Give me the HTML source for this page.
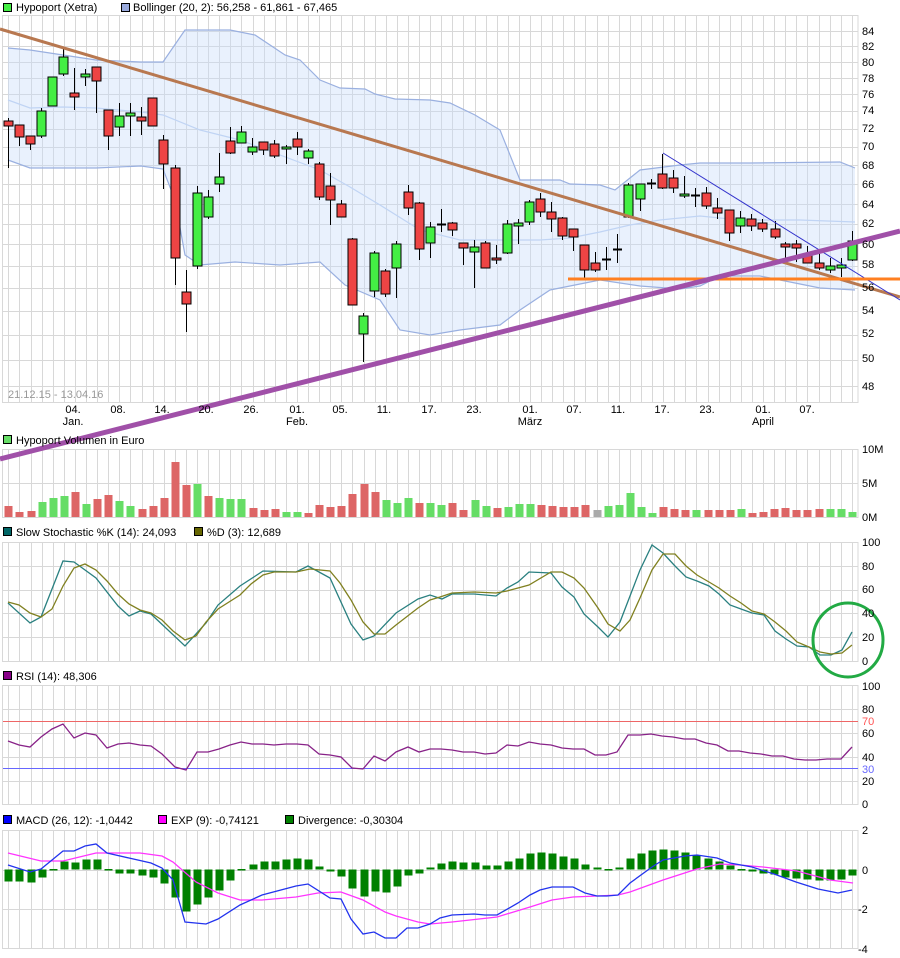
<!DOCTYPE html>
<html><head><meta charset="utf-8"><style>
html,body{margin:0;padding:0;background:#fff;width:900px;height:958px;overflow:hidden}
svg{display:block}
text{font-family:"Liberation Sans",sans-serif;font-size:11px;fill:#000}
</style></head><body>
<svg id="s" width="900" height="958" xmlns="http://www.w3.org/2000/svg">
<rect width="900" height="958" fill="#fff"/>
<g id="grid"></g>
<g id="boll"></g>
<g id="candles"></g>
<g id="lines"></g>
<!-- headers -->
<rect x="3.5" y="3.5" width="8" height="8" fill="#44ee44" stroke="#000"/>
<text x="16" y="11">Hypoport (Xetra)</text>
<rect x="121.5" y="3.5" width="8" height="8" fill="#99aadd" stroke="#000"/>
<text x="133" y="11">Bollinger (20, 2): 56,258 - 61,861 - 67,465</text>
<text x="8" y="398" style="fill:#999">21.12.15 - 13.04.16</text>
<g text-anchor="middle">
<text x="73" y="413">04.</text><text x="73" y="425">Jan.</text>
<text x="118" y="413">08.</text>
<text x="162" y="413">14.</text>
<text x="206" y="413">20.</text>
<text x="251" y="413">26.</text>
<text x="297" y="413">01.</text><text x="297" y="425">Feb.</text>
<text x="340" y="413">05.</text>
<text x="384" y="413">11.</text>
<text x="429" y="413">17.</text>
<text x="474" y="413">23.</text>
<text x="530" y="413">01.</text><text x="530" y="425">März</text>
<text x="574" y="413">07.</text>
<text x="618" y="413">11.</text>
<text x="662" y="413">17.</text>
<text x="707" y="413">23.</text>
<text x="763" y="413">01.</text><text x="763" y="425">April</text>
<text x="807" y="413">07.</text>
</g>
<g id="plabels">
<text x="862" y="35">84</text><text x="862" y="50">82</text><text x="862" y="66">80</text><text x="862" y="82">78</text><text x="862" y="98">76</text><text x="862" y="114">74</text><text x="862" y="132">72</text><text x="862" y="150">70</text><text x="862" y="169">68</text><text x="862" y="188">66</text><text x="862" y="208">64</text><text x="862" y="227">62</text><text x="862" y="248">60</text><text x="862" y="268">58</text><text x="862" y="291">56</text><text x="862" y="314">54</text><text x="862" y="337">52</text><text x="862" y="362">50</text><text x="862" y="390">48</text>
</g>
<rect x="3.5" y="435.5" width="8" height="8" fill="#66dd66" stroke="#000"/>
<text x="16" y="444">Hypoport Volumen in Euro</text>
<text x="862" y="453">10M</text><text x="862" y="487">5M</text><text x="862" y="521">0M</text>
<rect x="3.5" y="527.5" width="8" height="8" fill="#006666" stroke="#000"/>
<text x="16" y="536">Slow Stochastic %K (14): 24,093</text>
<rect x="194.5" y="527.5" width="8" height="8" fill="#666600" stroke="#000"/>
<text x="207" y="536">%D (3): 12,689</text>
<text x="862" y="546">100</text><text x="862" y="570">80</text><text x="862" y="593">60</text><text x="862" y="617">40</text><text x="862" y="641">20</text><text x="862" y="665">0</text>
<rect x="3.5" y="671.5" width="8" height="8" fill="#880088" stroke="#000"/>
<text x="16" y="680">RSI (14): 48,306</text>
<text x="862" y="690">100</text><text x="862" y="713">80</text><text x="862" y="725" style="fill:#ff5555">70</text><text x="862" y="737">60</text><text x="862" y="761">40</text><text x="862" y="773" style="fill:#6666ff">30</text><text x="862" y="785">20</text><text x="862" y="808">0</text>
<rect x="3.5" y="815.5" width="8" height="8" fill="#0000ff" stroke="#000"/>
<text x="16" y="824">MACD (26, 12): -1,0442</text>
<rect x="158.5" y="815.5" width="8" height="8" fill="#ff00ff" stroke="#000"/>
<text x="171" y="824">EXP (9): -0,74121</text>
<rect x="285.5" y="815.5" width="8" height="8" fill="#008000" stroke="#000"/>
<text x="298" y="824">Divergence: -0,30304</text>
<text x="862" y="834">2</text><text x="862" y="874">0</text><text x="858" y="913">-2</text><text x="858" y="953">-4</text>
</svg>
<script>
var NS="http://www.w3.org/2000/svg";
function el(p,t,a){var e=document.createElementNS(NS,t);for(var k in a)e.setAttribute(k,a[k]);document.getElementById(p).appendChild(e);return e;}
function pl(p,pts,c,w,extra){var a={points:pts.map(function(q){return q.join(",")}).join(" "),fill:"none",stroke:c,"stroke-width":w};for(var k in extra)a[k]=extra[k];return el(p,"polyline",a);}
var G="#d8d8d8";
function py(v){return 31+634.4*(Math.log(84)-Math.log(v));}
// panels: [top,bottom,hlines]
var panels=[[15,402,[]],[449,517,[483]],[542,661,[566,590,613,637]],[685,804,[709,733,757,781]],[830,948,[869.5,909]]];
for(var v=48;v<=84;v+=2)panels[0][2].push(py(v));
panels.forEach(function(P){
 el("grid","rect",{x:2.5,y:P[0]+.5,width:855.5,height:P[1]-P[0],fill:"#fff",stroke:G});
 for(var i=0;i<77;i++){var x=Math.round(8.3+11.1*i)+.5;el("grid","line",{x1:x,y1:P[0],x2:x,y2:P[1],stroke:G});}
 P[2].forEach(function(y){y=Math.round(y)+.5;el("grid","line",{x1:3,y1:y,x2:858,y2:y,stroke:G});});
});
// bollinger
var up=[[8,48],[30,50],[63,55],[96,60],[141,62],[163,62],[185,30],[230,30],[255,35],[285,55],[300,60],[320,80],[340,88],[365,89],[375,94],[395,99],[430,100],[450,103],[475,115],[500,130],[520,180],[560,180],[570,184],[600,185],[615,190],[640,170],[680,165],[700,163],[750,163],[840,162],[855,168]];
var lo=[[8,160],[30,168],[63,168],[96,168],[141,166],[163,169],[175,200],[185,255],[200,265],[235,262],[280,265],[320,262],[345,285],[380,300],[400,330],[430,335],[460,330],[500,325],[520,310],[550,290],[575,285],[600,280],[640,286],[680,289],[700,286],[720,276],[760,276],[780,280],[820,288],[855,290]];
var mid=[[8,100],[30,108],[63,107],[96,108],[141,112],[163,115],[200,130],[240,140],[320,170],[350,187],[380,205],[420,230],[460,240],[500,240],[540,240],[570,238],[600,232],[630,225],[660,220],[700,216],[740,220],[800,220],[855,222]];
el("boll","polygon",{points:up.concat(lo.slice().reverse()).map(function(q){return q.join(",")}).join(" "),fill:"rgba(200,220,250,0.4)",stroke:"none"});
pl("boll",up,"#9ab0e0",1.2);pl("boll",lo,"#9ab0e0",1.2);pl("boll",mid,"#c0d4f4",1.2);
// candles [x,bodyTop,bodyBot,wickTop,wickBot,color g/r/d]
var C=[[8,121,126,118,168,'r'],[19,125,137,125,146,'r'],[30,136,144,136,150,'r'],[41,111,136,108,138,'g'],[52,77,106,77,106,'g'],[63,57,74,49,76,'g'],[74,93,97,68,110,'r'],[85,74,77,69,86,'g'],[96,67,81,67,113,'r'],[108,110,136,110,150,'r'],[119,116,127,103,136,'g'],[130,113,116,103,136,'g'],[141,117,121,107,135,'r'],[152,98,126,98,126,'r'],[163,140,164,135,189,'r'],[175,168,258,165,285,'r'],[186,292,304,270,332,'r'],[197,193,266,186,269,'g'],[208,197,217,190,219,'g'],[219,177,184,153,192,'g'],[230,141,153,127,154,'r'],[241,132,143,126,143,'g'],[252,147,152,138,155,'g'],[263,142,150,142,155,'r'],[274,144,156,140,158,'r'],[286,147,149,145,164,'g'],[297,139,147,132,155,'r'],[308,151,158,149,164,'g'],[319,164,197,162,200,'r'],[330,186,200,173,225,'r'],[341,204,217,200,217,'r'],[352,239,305,238,305,'r'],[363,316,334,313,362,'g'],[374,253,291,251,297,'g'],[385,271,294,269,297,'r'],[396,244,268,241,298,'g'],[408,192,208,185,215,'r'],[419,203,249,202,260,'r'],[430,227,243,222,258,'g'],[441,224,224,209,232,'d'],[452,223,230,222,236,'r'],[463,243,248,243,265,'r'],[474,247,252,240,288,'g'],[485,243,268,241,268,'r'],[496,258,260,245,264,'r'],[507,224,253,220,254,'g'],[518,223,226,219,244,'g'],[529,202,222,200,225,'g'],[540,199,212,193,217,'r'],[551,212,219,202,232,'r'],[562,218,236,217,240,'r'],[573,229,237,229,251,'r'],[584,245,270,245,278,'r'],[595,263,270,252,272,'r'],[606,259,259,247,270,'d'],[617,249,249,234,263,'d'],[628,185,217,183,218,'g'],[640,184,199,184,211,'g'],[651,183,183,179,189,'d'],[662,174,188,154,189,'r'],[673,178,188,170,193,'r'],[684,194,196,176,198,'g'],[695,195,195,188,207,'d'],[706,193,206,187,209,'r'],[717,208,213,198,219,'r'],[729,210,233,210,241,'r'],[740,218,226,211,233,'g'],[751,219,226,214,231,'r'],[762,223,229,219,232,'r'],[775,229,237,221,239,'r'],[785,244,247,242,262,'r'],[796,244,248,240,262,'r'],[807,254,263,246,263,'r'],[819,263,268,253,270,'r'],[830,266,270,258,273,'g'],[841,265,268,258,277,'g'],[852,241,260,231,261,'g']];
C.forEach(function(c){
 el("candles","line",{x1:c[0]+.5,y1:c[3],x2:c[0]+.5,y2:c[4],stroke:"#000","stroke-width":1});
 if(c[5]=='d'){el("candles","line",{x1:c[0]-4,y1:c[1]+.5,x2:c[0]+5,y2:c[1]+.5,stroke:"#000","stroke-width":2});}
 else el("candles","rect",{x:c[0]-4,y:c[1],width:9,height:Math.max(2,c[2]-c[1]),fill:c[5]=='g'?"#44ee44":"#ee4444",stroke:"#000","stroke-width":1});
});
// trend lines
el("lines","line",{x1:0,y1:29,x2:900,y2:297,stroke:"#b87850","stroke-width":3});
el("lines","line",{x1:663,y1:153,x2:900,y2:300,stroke:"#3333cc","stroke-width":1});
el("lines","line",{x1:568,y1:279,x2:900,y2:279,stroke:"#ff7f20","stroke-width":3});
el("lines","line",{x1:0,y1:459,x2:900,y2:231,stroke:"#a050a8","stroke-width":5});
// volume
var V=[[8,506,'r'],[19,512,'r'],[30,511,'r'],[41,502,'g'],[52,498,'g'],[63,496,'g'],[74,492,'r'],[85,504,'g'],[96,499,'r'],[107,495,'r'],[118,501,'g'],[129,506,'g'],[140,509,'r'],[151,506,'r'],[162,498,'r'],[173,462,'r'],[184,485,'r'],[195,484,'g'],[206,496,'r'],[217,498,'g'],[228,499,'g'],[239,499,'g'],[250,508,'r'],[261,510,'r'],[272,509,'r'],[283,512,'g'],[294,512,'g'],[305,513,'r'],[316,505,'r'],[327,507,'r'],[338,506,'r'],[349,494,'r'],[360,484,'r'],[371,492,'r'],[382,500,'g'],[393,503,'g'],[404,498,'g'],[415,503,'r'],[426,503,'g'],[437,505,'g'],[448,503,'r'],[459,510,'r'],[470,500,'g'],[481,506,'g'],[492,508,'r'],[503,507,'g'],[514,504,'g'],[525,504,'g'],[536,505,'r'],[547,506,'r'],[558,507,'r'],[569,507,'r'],[580,505,'r'],[591,510,'x'],[604,506,'g'],[615,505,'g'],[628,493,'g'],[640,507,'g'],[651,513,'g'],[662,507,'r'],[673,509,'r'],[684,510,'r'],[695,510,'g'],[706,510,'r'],[717,510,'r'],[728,510,'r'],[739,509,'g'],[750,513,'r'],[761,512,'r'],[772,509,'r'],[783,508,'r'],[794,510,'r'],[805,510,'r'],[816,509,'r'],[827,509,'g'],[838,509,'g'],[849,512,'g']];
V.forEach(function(b,i){var x=Math.round(8.3+11.1*i);el("lines","rect",{x:x-3.5,y:b[1],width:8,height:517-b[1],fill:b[2]=='g'?"#66dd66":b[2]=='r'?"#dd6666":"#aaaaaa"});});
// stochastic
pl("lines",[[8,603],[30,623],[41,617],[63,561],[74,562],[96,578],[118,606],[129,616],[140,611],[151,614],[185,646],[206,623],[218,605],[240,586],[263,571],[296,572],[308,566],[330,578],[351,624],[363,640],[374,636],[396,613],[418,599],[430,595],[442,599],[452,594],[474,594],[496,596],[507,588],[518,582],[529,572],[551,573],[562,587],[574,597],[584,614],[598,627],[608,637],[620,622],[640,570],[652,545],[663,553],[675,566],[686,577],[697,581],[709,586],[719,594],[730,605],[741,609],[752,613],[764,615],[775,631],[786,639],[797,646],[809,647],[820,655],[831,655],[842,650],[852,632]],"#2a8080",1.3);
pl("lines",[[8,602],[19,605],[30,613],[41,617],[52,609],[63,586],[74,568],[85,564],[96,570],[107,581],[118,594],[129,604],[140,610],[151,613],[162,620],[173,631],[185,640],[196,636],[206,622],[218,609],[240,595],[251,584],[263,575],[274,572],[296,572],[310,569],[330,571],[340,583],[351,600],[363,622],[374,634],[385,634],[396,625],[418,608],[430,600],[440,597],[452,593],[474,592],[496,593],[507,591],[518,588],[529,585],[551,572],[562,572],[574,578],[584,588],[598,608],[608,624],[620,631],[630,620],[640,598],[652,570],[663,554],[675,554],[686,566],[697,575],[709,582],[719,588],[730,596],[741,603],[752,611],[764,614],[775,622],[786,631],[797,642],[809,647],[820,652],[831,654],[842,653],[852,645]],"#808020",1.3);
el("lines","ellipse",{cx:848,cy:640,rx:35,ry:37,fill:"none",stroke:"#22aa44","stroke-width":3});
// RSI
el("lines","line",{x1:3,y1:721.5,x2:858,y2:721.5,stroke:"#ee6666"});
el("lines","line",{x1:3,y1:768.5,x2:858,y2:768.5,stroke:"#6666ff"});
pl("lines",[[8,741],[19,745],[30,747],[41,737],[52,729],[63,724],[74,738],[85,733],[96,735],[107,748],[118,744],[129,743],[140,745],[151,746],[162,754],[175,767],[186,770],[197,752],[208,752],[219,749],[230,745],[241,742],[252,744],[263,744],[274,745],[286,744],[297,744],[308,745],[319,754],[330,755],[341,757],[352,768],[363,769],[374,756],[385,761],[396,752],[408,747],[419,752],[430,749],[441,749],[452,750],[463,752],[474,752],[485,754],[496,753],[507,745],[518,746],[529,742],[540,744],[551,745],[562,748],[573,749],[584,749],[595,755],[606,755],[617,752],[628,735],[640,735],[651,734],[662,736],[673,737],[684,739],[695,739],[706,743],[717,745],[728,751],[739,751],[750,753],[761,754],[772,756],[783,756],[794,759],[805,760],[816,760],[827,759],[841,759],[852,747]],"#882288",1.3);
// MACD hist
var H=[-12,-12,-13,-8,-1,8,7,10,10,-1,-4,-4,-6,-8,-14,-28,-42,-35,-28,-21,-11,-1,5,8,8,10,11,10,3,-2,-7,-19,-27,-22,-23,-17,-6,-4,2,6,8,7,7,4,4,8,11,16,17,16,13,11,5,2,1,2,11,16,19,20,19,17,14,11,8,4,1,-2,-4,-5,-8,-9,-10,-11,-11,-10,-6];
H.forEach(function(h,i){var x=Math.round(8.3+11.1*i);var y0=869.5;if(Math.abs(h)<1.5){el("lines","rect",{x:x-3.5,y:y0-0.5,width:8,height:1.5,fill:"#008000"});return;}el("lines","rect",{x:x-3.5,y:h>0?y0-h:y0,width:8,height:Math.abs(h),fill:"#008000"});});
pl("lines",[[8,853],[41,861],[63,861],[96,853],[140,853],[162,856],[173,862],[196,882],[218,893],[240,900],[262,900],[296,897],[318,893],[341,892],[363,900],[385,912],[396,916],[418,922],[430,924],[452,922],[497,917],[530,907],[552,900],[573,897],[597,896],[618,895],[630,892],[663,880],[697,869],[720,864],[740,865],[763,867],[797,871],[830,880],[853,883]],"#ff33ff",1.3);
pl("lines",[[8,865],[30,872],[41,869],[63,851],[74,851],[85,846],[96,844],[107,853],[129,858],[151,863],[162,868],[173,880],[185,922],[206,924],[218,919],[240,905],[262,895],[296,886],[308,884],[330,898],[341,899],[351,919],[363,934],[374,932],[385,938],[396,938],[407,928],[418,928],[430,924],[440,918],[452,915],[474,914],[485,915],[497,915],[518,903],[530,895],[540,890],[552,887],[573,887],[585,893],[597,896],[607,896],[618,895],[630,883],[652,867],[663,860],[685,856],[697,855],[717,858],[730,863],[752,867],[774,874],[796,882],[818,889],[838,893],[852,890]],"#2233ee",1.3);
</script>
</body></html>
